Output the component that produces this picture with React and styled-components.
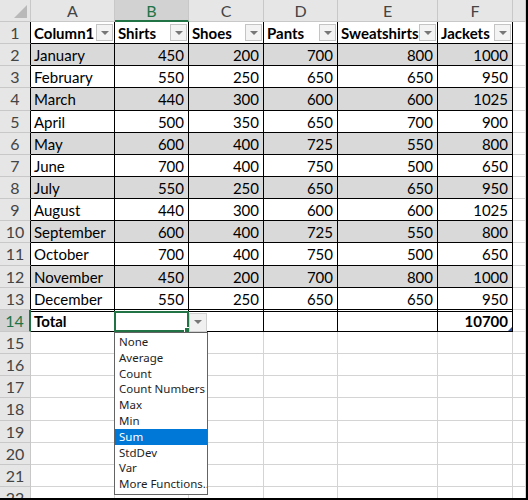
import React from 'react';
import styled, { createGlobalStyle, css } from 'styled-components';

const GlobalStyle = createGlobalStyle`
  html, body {
    margin: 0;
    padding: 0;
    background: #fff;
  }
`;

const Frame = styled.div`
  width: 528px;
  height: 500px;
  box-sizing: border-box;
  border-right: 2px solid #000;
  border-bottom: 2px solid #000;
  overflow: hidden;
  background: #fff;
  font-family: Lato, 'Liberation Sans', sans-serif;
  font-size: 15px;
  color: #000;
`;

const Sheet = styled.div`
  display: grid;
  grid-template-columns: 31px 84px 74px 75px 74px 100px 75px 1fr;
  grid-template-rows: 22px;
  grid-auto-rows: 22.15px;
`;

const Corner = styled.div`
  position: relative;
  background: #e6e6e6;
  border-right: 1px solid #c8c8c8;
  border-bottom: 1px solid #c8c8c8;
  box-sizing: border-box;

  &::after {
    content: '';
    position: absolute;
    right: 3px;
    bottom: 3px;
    width: 0;
    height: 0;
    border-left: 13px solid transparent;
    border-bottom: 13px solid #b9b9b9;
  }
`;

const ColHead = styled.div`
  display: flex;
  align-items: center;
  justify-content: center;
  box-sizing: border-box;
  background: ${(p) => (p.$active ? '#d2d2d2' : '#e6e6e6')};
  color: ${(p) => (p.$active ? '#217346' : '#444')};
  border-right: 1px solid #c8c8c8;
  border-bottom: ${(p) => (p.$active ? '2px solid #217346' : '1px solid #c8c8c8')};
  font-size: 16px;
`;

const RowHead = styled.div`
  display: flex;
  align-items: center;
  justify-content: center;
  box-sizing: border-box;
  background: ${(p) => (p.$active ? '#d2d2d2' : '#e6e6e6')};
  color: ${(p) => (p.$active ? '#217346' : '#444')};
  border-bottom: 1px solid #c8c8c8;
  border-right: ${(p) =>
    p.$active ? '2px solid #217346' : p.$table ? '1px solid #000' : '1px solid #c8c8c8'};
  font-size: 16px;
`;

const Cell = styled.div`
  position: relative;
  display: flex;
  align-items: center;
  justify-content: ${(p) => (p.$num ? 'flex-end' : 'flex-start')};
  box-sizing: border-box;
  padding: 1px 4px 0 3px;
  white-space: nowrap;
  background: ${(p) => (p.$gray ? '#d9d9d9' : '#fff')};
  font-weight: ${(p) => (p.$bold ? 700 : 400)};
  border-right: 1px solid ${(p) => (p.$table ? '#000' : '#d4d4d4')};
  border-bottom: 1px solid ${(p) => (p.$table ? '#000' : '#d4d4d4')};
  ${(p) =>
    p.$total &&
    css`
      box-shadow: inset 0 1px 0 #fff, inset 0 2px 0 #000;
    `}
  ${(p) =>
    p.$raised &&
    css`
      z-index: 4;
    `}
`;

const FilterButton = styled.span`
  position: absolute;
  right: 1px;
  top: 2px;
  width: 17px;
  height: 17px;
  box-sizing: border-box;
  display: flex;
  align-items: center;
  justify-content: center;
  background: #f3f3f3;
  border: 1px solid #c4c4c4;

  &::after {
    content: '';
    border-left: 4px solid transparent;
    border-right: 4px solid transparent;
    border-top: 4px solid #777;
  }
`;

const Selection = styled.span`
  position: absolute;
  left: -1px;
  top: 1px;
  right: -1px;
  bottom: -1px;
  border: 2px solid #217346;
  pointer-events: none;

  &::after {
    content: '';
    position: absolute;
    right: -4px;
    bottom: -4px;
    width: 5px;
    height: 5px;
    background: #217346;
    border: 1px solid #fff;
  }
`;

const TotalButton = styled(FilterButton)`
  right: auto;
  left: calc(100% + 1px);
  top: 3px;
  width: 18px;
  height: 19px;
  background: #f0f0f0;
  border-color: #d0d0d0;
`;

const ResizeHandle = styled.span`
  position: absolute;
  right: 0;
  bottom: 0;
  width: 0;
  height: 0;
  border-left: 4px solid transparent;
  border-bottom: 4px solid #2f4f9f;
`;

const Menu = styled.ul`
  position: absolute;
  left: -1px;
  top: calc(100% + 1px);
  width: 94px;
  margin: 0;
  padding: 1px 0 2px;
  list-style: none;
  box-sizing: border-box;
  background: #fff;
  border: 1px solid #646464;
  font-family: 'Noto Sans', 'Open Sans', sans-serif;
  font-size: 11.5px;
  font-weight: 400;
  color: #1e1e1e;
`;

const MenuItem = styled.li`
  height: 15.8px;
  line-height: 15.8px;
  padding: 0 0 0 4px;
  white-space: nowrap;
  overflow: hidden;
  color: ${(p) => (p.$selected ? '#fff' : 'inherit')};
  background: ${(p) => (p.$selected ? '#0078d7' : 'transparent')};
`;

const columns = ['A', 'B', 'C', 'D', 'E', 'F', 'G'];
const headers = ['Column1', 'Shirts', 'Shoes', 'Pants', 'Sweatshirts', 'Jackets'];

const rows = [
  ['January', 450, 200, 700, 800, 1000],
  ['February', 550, 250, 650, 650, 950],
  ['March', 440, 300, 600, 600, 1025],
  ['April', 500, 350, 650, 700, 900],
  ['May', 600, 400, 725, 550, 800],
  ['June', 700, 400, 750, 500, 650],
  ['July', 550, 250, 650, 650, 950],
  ['August', 440, 300, 600, 600, 1025],
  ['September', 600, 400, 725, 550, 800],
  ['October', 700, 400, 750, 500, 650],
  ['November', 450, 200, 700, 800, 1000],
  ['December', 550, 250, 650, 650, 950],
];

const functions = [
  'None',
  'Average',
  'Count',
  'Count Numbers',
  'Max',
  'Min',
  'Sum',
  'StdDev',
  'Var',
  'More Functions...',
];

const App = () => {
  return (
    <>
      <GlobalStyle />
      <Frame>
        <Sheet>
          <Corner />
          {columns.map((c) => (
            <ColHead key={c} $active={c === 'B'}>
              {/* column G is cut off at the window edge, its letter is out of view */}
              {c === 'G' ? null : c}
            </ColHead>
          ))}

          <RowHead $table>1</RowHead>
          {headers.map((h) => (
            <Cell key={h} $table $bold>
              {h}
              <FilterButton />
            </Cell>
          ))}
          <Cell />

          {rows.map((r, i) => (
            <React.Fragment key={r[0]}>
              <RowHead $table>{i + 2}</RowHead>
              {r.map((v, j) => (
                <Cell key={j} $table $num={j > 0} $gray={i % 2 === 0}>
                  {v}
                </Cell>
              ))}
              <Cell />
            </React.Fragment>
          ))}

          <RowHead $active>14</RowHead>
          <Cell $table $total $bold>
            Total
          </Cell>
          <Cell $table $total $raised>
            <Selection />
            <TotalButton />
            <Menu>
              {functions.map((f) => (
                <MenuItem key={f} $selected={f === 'Sum'}>
                  {f}
                </MenuItem>
              ))}
            </Menu>
          </Cell>
          <Cell $table $total />
          <Cell $table $total />
          <Cell $table $total />
          <Cell $table $total $num $bold>
            10700
            <ResizeHandle />
          </Cell>
          <Cell />

          {[15, 16, 17, 18, 19, 20, 21, 22].map((n) => (
            <React.Fragment key={n}>
              <RowHead>{n}</RowHead>
              {columns.map((c) => (
                <Cell key={c} />
              ))}
            </React.Fragment>
          ))}
        </Sheet>
      </Frame>
    </>
  );
};

export default App;
